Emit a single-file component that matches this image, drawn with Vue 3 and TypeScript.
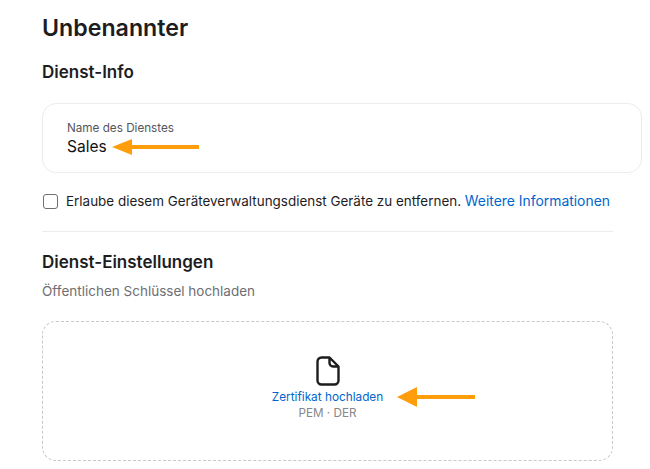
<template>
  <main class="page">
    <h1 class="title">Unbenannter</h1>
    <h2 class="heading">Dienst-Info</h2>
    <section class="name-card">
      <span class="name-label">Name des Dienstes</span>
      <span class="name-value">Sales</span>
      <svg class="arrow arrow-name" width="88" height="20" viewBox="0 0 88 20">
        <path d="M0 10 L20 2 V8 H87 V12 H20 V18 Z" fill="#ff9d0a" />
      </svg>
    </section>
    <label class="check-row">
      <span class="checkbox"></span>
      <span>Erlaube diesem Geräteverwaltungsdienst Geräte zu entfernen. <a class="link">Weitere Informationen</a></span>
    </label>
    <hr class="divider" />
    <h2 class="heading heading-settings">Dienst-Einstellungen</h2>
    <p class="hint">Öffentlichen Schlüssel hochladen</p>
    <section class="drop">
      <svg class="file-icon" width="24" height="30" viewBox="0 0 24 30" fill="none">
        <path d="M5.5 1.5 H13.5 L22.5 10.5 V24.5 A4 4 0 0 1 18.5 28.5 H5.5 A4 4 0 0 1 1.5 24.5 V5.5 A4 4 0 0 1 5.5 1.5 Z M13.5 1.5 V7 A3.5 3.5 0 0 0 17 10.5 H22.5" stroke="#1d1d1f" stroke-width="2.4" stroke-linejoin="round" />
      </svg>
      <div class="upload-wrap">
        <a class="upload">Zertifikat hochladen</a>
        <svg class="arrow arrow-upload" width="78" height="20" viewBox="0 0 78 20">
          <path d="M0 10 L20 0 V8 H78 V12 H20 V20 Z" fill="#ff9d0a" />
        </svg>
      </div>
      <span class="formats">PEM · DER</span>
    </section>
  </main>
</template>

<script setup lang="ts">
</script>

<style>
html,
body {
  margin: 0;
  background: #fff;
  overflow: hidden;
}
</style>

<style scoped>
.page {
  box-sizing: border-box;
  width: 650px;
  height: 469px;
  padding: 14px 0 0 42px;
  font-family: Inter, "Noto Sans", sans-serif;
  color: #1d1d1f;
  overflow: hidden;
}

.title {
  margin: 0;
  font-size: 23.2px;
  line-height: 28px;
  font-weight: 600;
}

.heading {
  margin: 20px 0 0;
  font-size: 17px;
  line-height: 20px;
  font-weight: 600;
}

.name-card {
  position: relative;
  box-sizing: border-box;
  width: 600px;
  height: 70px;
  margin-top: 21px;
  padding: 17px 24px 0;
  display: flex;
  flex-direction: column;
  border: 1px solid #ececee;
  border-radius: 14px;
}

.name-label {
  font-size: 11.7px;
  line-height: 14px;
  color: #55555c;
}

.name-value {
  margin-top: 2px;
  font-size: 15.5px;
  line-height: 20px;
  color: #111;
}

.arrow {
  position: absolute;
}

.arrow-name {
  left: 69px;
  top: 33px;
}

.check-row {
  display: flex;
  align-items: center;
  gap: 8px;
  margin-top: 18px;
  font-size: 13.45px;
  line-height: 20px;
  color: #1d1d1f;
}

.checkbox {
  box-sizing: border-box;
  width: 15px;
  height: 15px;
  border: 1.5px solid #6e6e73;
  border-radius: 3px;
  margin-left: 1px;
}

.link,
.upload {
  color: #0066cc;
}

.link {
  font-size: 13.9px;
}

.divider {
  width: 571px;
  height: 1px;
  margin: 20px 0 0;
  border: 0;
  background: #ececee;
}

.heading-settings {
  margin-top: 20px;
}

.hint {
  margin: 10px 0 0;
  font-size: 13.5px;
  line-height: 18px;
  color: #6e6e73;
}

.drop {
  box-sizing: border-box;
  width: 571px;
  height: 140px;
  margin-top: 21px;
  padding-top: 34px;
  display: flex;
  flex-direction: column;
  align-items: center;
  border: 1px dashed #c8c8cc;
  border-radius: 14px;
}

.file-icon {
  display: block;
}

.upload-wrap {
  position: relative;
  margin-top: 3px;
  font-size: 11.8px;
  line-height: 16px;
}

.arrow-upload {
  left: 125px;
  top: -2px;
}

.formats {
  font-size: 11.7px;
  line-height: 16px;
  color: #86868b;
}
</style>
